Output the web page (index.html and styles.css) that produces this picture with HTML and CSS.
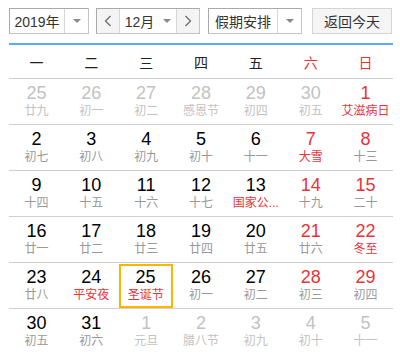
FILE: index.html
```html
<!DOCTYPE html>
<html lang="zh">
<head>
<meta charset="utf-8">
<link rel="stylesheet" href="styles.css">
</head>
<body>
<div class="cal">
  <div class="toolbar">
    <div class="box year">
      <span class="val">2019年</span>
      <span class="drop"><i class="caret"></i></span>
    </div>
    <div class="box month">
      <span class="nav"><svg width="8" height="12" viewBox="0 0 8 12"><polyline points="6.5,1 1.5,6 6.5,11" fill="none" stroke="#666" stroke-width="1.2"/></svg></span>
      <span class="mval">12月<i class="caret"></i></span>
      <span class="nav"><svg width="8" height="12" viewBox="0 0 8 12"><polyline points="1.5,1 6.5,6 1.5,11" fill="none" stroke="#666" stroke-width="1.2"/></svg></span>
    </div>
    <div class="box holiday">
      <span class="val">假期安排</span>
      <span class="drop"><i class="caret"></i></span>
    </div>
    <div class="btn">返回今天</div>
  </div>
  <div class="grid">
    <div class="wk">
      <span>一</span><span>二</span><span>三</span><span>四</span><span>五</span><span class="red">六</span><span class="red">日</span>
    </div>
    <div class="row">
      <div class="cell other"><b>25</b><em>廿九</em></div>
      <div class="cell other"><b>26</b><em>初一</em></div>
      <div class="cell other"><b>27</b><em>初二</em></div>
      <div class="cell other"><b>28</b><em>感恩节</em></div>
      <div class="cell other"><b>29</b><em>初四</em></div>
      <div class="cell other"><b>30</b><em>初五</em></div>
      <div class="cell we fest"><b>1</b><em>艾滋病日</em></div>
    </div>
    <div class="row">
      <div class="cell"><b>2</b><em>初七</em></div>
      <div class="cell"><b>3</b><em>初八</em></div>
      <div class="cell"><b>4</b><em>初九</em></div>
      <div class="cell"><b>5</b><em>初十</em></div>
      <div class="cell"><b>6</b><em>十一</em></div>
      <div class="cell we fest"><b>7</b><em>大雪</em></div>
      <div class="cell we"><b>8</b><em>十三</em></div>
    </div>
    <div class="row">
      <div class="cell"><b>9</b><em>十四</em></div>
      <div class="cell"><b>10</b><em>十五</em></div>
      <div class="cell"><b>11</b><em>十六</em></div>
      <div class="cell"><b>12</b><em>十七</em></div>
      <div class="cell fest"><b>13</b><em>国家公...</em></div>
      <div class="cell we"><b>14</b><em>十九</em></div>
      <div class="cell we"><b>15</b><em>二十</em></div>
    </div>
    <div class="row">
      <div class="cell"><b>16</b><em>廿一</em></div>
      <div class="cell"><b>17</b><em>廿二</em></div>
      <div class="cell"><b>18</b><em>廿三</em></div>
      <div class="cell"><b>19</b><em>廿四</em></div>
      <div class="cell"><b>20</b><em>廿五</em></div>
      <div class="cell we"><b>21</b><em>廿六</em></div>
      <div class="cell we fest"><b>22</b><em>冬至</em></div>
    </div>
    <div class="row">
      <div class="cell"><b>23</b><em>廿八</em></div>
      <div class="cell fest"><b>24</b><em>平安夜</em></div>
      <div class="cell fest sel"><b>25</b><em>圣诞节</em></div>
      <div class="cell"><b>26</b><em>初一</em></div>
      <div class="cell"><b>27</b><em>初二</em></div>
      <div class="cell we"><b>28</b><em>初三</em></div>
      <div class="cell we"><b>29</b><em>初四</em></div>
    </div>
    <div class="row last">
      <div class="cell"><b>30</b><em>初五</em></div>
      <div class="cell"><b>31</b><em>初六</em></div>
      <div class="cell other"><b>1</b><em>元旦</em></div>
      <div class="cell other"><b>2</b><em>腊八节</em></div>
      <div class="cell other"><b>3</b><em>初九</em></div>
      <div class="cell other"><b>4</b><em>初十</em></div>
      <div class="cell other"><b>5</b><em>十一</em></div>
    </div>
  </div>
</div>
</body>
</html>
```
FILE: styles.css
```css
html, body {
  margin: 0;
  padding: 0;
  background: #fff;
}
body {
  font-family: "Liberation Sans", "Noto Sans CJK SC", sans-serif;
  color: #333;
}
.cal {
  width: 384px;
  padding: 8px 0 0 9px;
}
.toolbar {
  display: flex;
  height: 26px;
  font-size: 14px;
}
.box {
  display: flex;
  box-sizing: border-box;
  height: 26px;
  border: 1px solid #c4c4c4;
  border-top-color: #a9a9a9;
  border-left-color: #a9a9a9;
  background: #fff;
}
.year { width: 80px; }
.month { width: 104px; margin-left: 7px; background: #f4f4f4; }
.holiday { width: 94px; margin-left: 8px; }
.val {
  flex: 1;
  display: flex;
  align-items: center;
  justify-content: center;
  border-right: 1px solid #d6d6d6;
}
.drop {
  width: 23px;
  display: flex;
  align-items: center;
  justify-content: center;
}
.caret {
  display: inline-block;
  width: 0;
  height: 0;
  border-left: 4px solid transparent;
  border-right: 4px solid transparent;
  border-top: 4px solid #8a8a8a;
}
.nav {
  width: 22px;
  display: flex;
  align-items: center;
  justify-content: center;
}
.mval {
  flex: 1;
  display: flex;
  align-items: center;
  justify-content: center;
  gap: 9px;
  background: #fff;
  border-left: 1px solid #d6d6d6;
  border-right: 1px solid #d6d6d6;
}
.btn {
  box-sizing: border-box;
  width: 80px;
  height: 26px;
  margin-left: 10px;
  border: 1px solid #d4d4d4;
  background: #f5f5f5;
  display: flex;
  align-items: center;
  justify-content: center;
}
.grid {
  margin-top: 9px;
  border-top: 2px solid #5aaaf6;
}
.wk {
  display: grid;
  grid-template-columns: repeat(7, 1fr);
  height: 33px;
  border-bottom: 1px solid #cfcfcf;
  font-size: 14px;
  color: #222;
}
.wk span {
  display: flex;
  align-items: center;
  justify-content: center;
}
.wk .red { color: #e8333a; }
.row {
  display: grid;
  grid-template-columns: repeat(7, 1fr);
  height: 45px;
  border-bottom: 1px solid #cfcfcf;
}
.row.last { border-bottom: none; }
.cell {
  display: flex;
  flex-direction: column;
  align-items: center;
  justify-content: center;
  box-sizing: border-box;
  padding-bottom: 2px;
}
.cell b {
  font-weight: normal;
  font-size: 18px;
  line-height: 20px;
  color: #000;
}
.cell em {
  font-style: normal;
  font-size: 12px;
  line-height: 16px;
  color: #999;
  white-space: nowrap;
}
.cell.we b { color: #e8333a; }
.cell.fest em { color: #e8333a; }
.cell.other b,
.cell.other em { color: #c2c2c2; }
.cell.sel {
  border: 2px solid #ffb400;
  margin: 1px 1px 0 0;
}
```
